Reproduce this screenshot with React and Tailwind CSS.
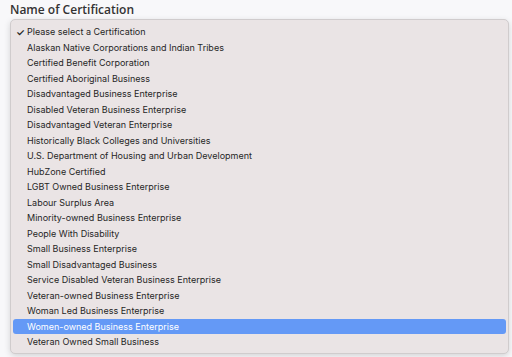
export default function App() {
  const items = [
    "Please select a Certification",
    "Alaskan Native Corporations and Indian Tribes",
    "Certified Benefit Corporation",
    "Certified Aboriginal Business",
    "Disadvantaged Business Enterprise",
    "Disabled Veteran Business Enterprise",
    "Disadvantaged Veteran Enterprise",
    "Historically Black Colleges and Universities",
    "U.S. Department of Housing and Urban Development",
    "HubZone Certified",
    "LGBT Owned Business Enterprise",
    "Labour Surplus Area",
    "Minority-owned Business Enterprise",
    "People With Disability",
    "Small Business Enterprise",
    "Small Disadvantaged Business",
    "Service Disabled Veteran Business Enterprise",
    "Veteran-owned Business Enterprise",
    "Woman Led Business Enterprise",
    "Women-owned Business Enterprise",
    "Veteran Owned Small Business",
  ];
  return (
    <div className="w-[512px] h-[357px] bg-[#f8f8fa] overflow-hidden relative">
      <div className="pl-[10px] pt-[2px] h-[19px] text-[12px] leading-[15px] font-semibold text-[#333] font-['Open_Sans',sans-serif]">
        Name of Certification
      </div>
      <div className="ml-[10px] w-[499px] h-[335px] bg-[#eae4e5] border border-[#d0cccd] rounded-[5px] shadow-[0_2px_6px_rgba(0,0,0,0.15)] px-[2px] pt-[4px] font-['Inter',sans-serif] text-[9px] text-[#262626]">
        {items.map((t, i) => {
          const sel = i === 19;
          return (
            <div
              key={i}
              className={`h-[15.5px] flex items-center rounded-[3px] ${sel ? "bg-[#6499f6] text-white" : ""}`}
            >
              <span className="w-[14px] pl-[3px] text-[10px] leading-none font-semibold">{i === 0 ? "✓" : ""}</span>
              <span className="whitespace-nowrap">{t}</span>
            </div>
          );
        })}
      </div>
    </div>
  );
}
